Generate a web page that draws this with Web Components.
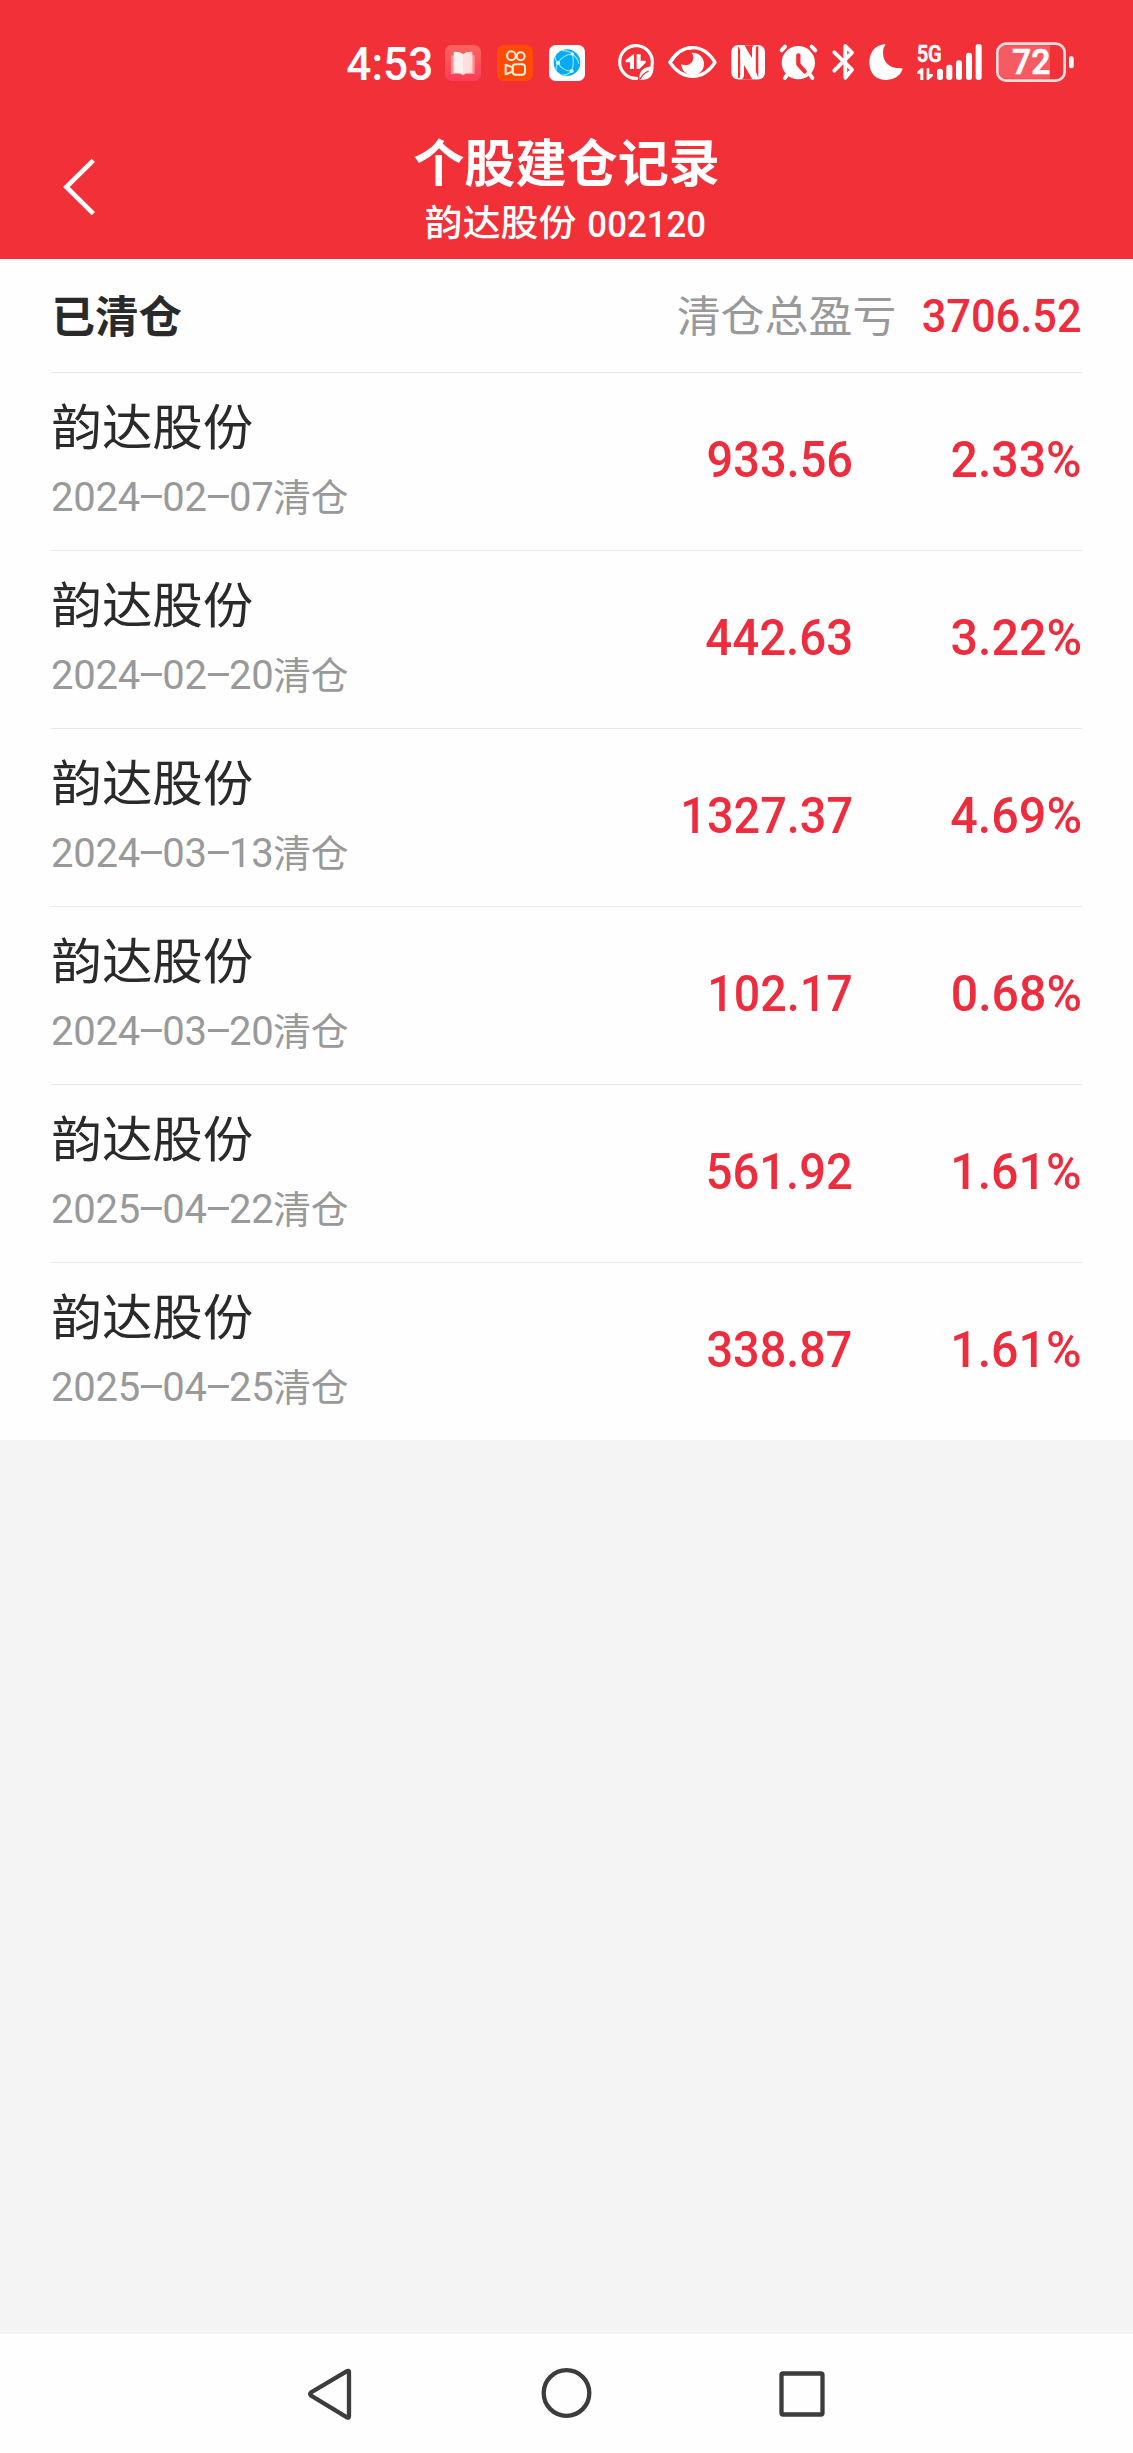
<!DOCTYPE html>
<html lang="zh-CN">
<head>
<meta charset="utf-8">
<title>个股建仓记录</title>
<style>
html,body{margin:0;padding:0}
body{background:#f4f4f4;font-family:Roboto,"Noto Sans CJK SC",sans-serif;color:#2a2a2a}
</style>
</head>
<body>
<record-page></record-page>
<script>
// Text whose drawn extent fills a w × h box exactly.
class FitText extends HTMLElement{
  constructor(){
    super();
    this.attachShadow({mode:'open'}).innerHTML=`<style>
      :host{display:block;flex:none;position:relative;white-space:nowrap;line-height:1}
      span{display:inline-block;transform-origin:0 0;white-space:pre}
      i{display:inline-block;width:0;height:0}
    </style><span><slot></slot><i></i></span>`;
  }
  connectedCallback(){
    const w=+this.getAttribute('w'),h=+this.getAttribute('h');
    this.style.width=w+'px';this.style.height=h+'px';
    const s=this.shadowRoot.querySelector('span'),p=this.shadowRoot.querySelector('i');
    const cs=getComputedStyle(this),c=document.createElement('canvas').getContext('2d');
    // Measured at ten times the size, since glyph extents are rounded to whole pixels.
    c.font=`${cs.fontWeight} ${parseFloat(cs.fontSize)*10}px ${cs.fontFamily}`;
    const m=c.measureText(this.textContent);
    const L=m.actualBoundingBoxLeft/10,R=m.actualBoundingBoxRight/10,A=m.actualBoundingBoxAscent/10,D=m.actualBoundingBoxDescent/10;
    const base=p.getBoundingClientRect().bottom-s.getBoundingClientRect().top;
    const kx=w/(R+L),ky=h/(A+D);
    s.style.transform=`translate(${L*kx}px,${-(base-A)*ky}px) scale(${kx},${ky})`;
  }
}
customElements.define('fit-text',FitText);

class StatusBar extends HTMLElement{
  constructor(){
    super();
    this.attachShadow({mode:'open'}).innerHTML=`<style>
      :host{display:flex;height:70px;padding:30px 0 0 347.3px;color:#fff}
      svg{display:block;height:70px;flex:none;fill:#fff;overflow:visible}
      .l{fill:none;stroke:#fff;stroke-linecap:round;stroke-linejoin:round}
      .r{fill:#f13038}
      fit-text{font-size:47px;font-weight:500;margin-top:16.8px}
      text{font-family:Roboto,sans-serif;font-weight:500}
    </style>
    <fit-text w="84" h="34.2">4:53</fit-text>
    <svg style="margin-left:12.7px" width="38" viewBox="342 0 114 210"><defs><linearGradient id="b" x2="0" y2="1"><stop stop-color="#ff6560"/><stop offset="1" stop-color="#ff3c58"/></linearGradient></defs><rect x="345" y="45" width="108" height="108" rx="20" fill="url(#b)"/><path d="M363 76h71v56h-28l-7 4-7-4h-29z" fill="#ff9292"/><path d="M371 66q17-2 28 6v62q-11-8-28-5z" fill="#fff0ee"/><path d="M427 66q-17-2-28 6v62q11-8 28-5z" fill="#ffdedc"/></svg>
    <svg style="margin-left:14px" width="38" viewBox="498 0 114 210"><rect x="501" y="45" width="108" height="108" rx="20" fill="#ff4b08"/><g fill="none" stroke="#fff0d8" stroke-width="6"><circle cx="544" cy="77" r="13"/><circle cx="572" cy="79" r="12"/><rect x="548" y="103" width="37" height="31" rx="9"/><path stroke-linejoin="round" d="M548 112l-21-8v29l21-8z"/></g></svg>
    <svg style="margin-left:14px" width="38" viewBox="654 0 114 210"><rect x="657" y="45" width="108" height="108" rx="20"/><circle cx="711" cy="98" r="40" fill="#08a9f5"/><g fill="none" stroke="#8ceaf2" stroke-width="3.500"><path d="M684 99q14-25 43-27M684 99q14 25 41 24M725 123q9-26 2-51M695 62q20-2 32 10M727 72q15 10 20 29M684 99q-10-10-8-19M684 99q-8 13-5 23M725 123q-13 14-30 12"/></g><g fill="#d9ffff"><circle cx="684" cy="99" r="6"/><circle cx="727" cy="72" r="5"/><circle cx="725" cy="123" r="6"/></g></svg>
    <svg style="margin-left:30px" width="39" viewBox="48 0 117 210"><path class="l" stroke-width="9.500" stroke-linecap="butt" d="M156 106A49 49 0 1 0 110 145"/><path d="M102 71L77 91V97H90V117H102zM110 73V117H118L137 98V92H122V73z"/><path d="M119 149q-6-38 42-40q0 45-42 40z"/><path d="M120 148q8-17 26-25" fill="none" stroke="#f13038" stroke-width="4"/></svg>
    <svg style="margin-left:13px" width="49" viewBox="204 0 147 210"><path class="l" stroke-width="10" d="M210 97Q238 53 278 53Q318 53 345 97Q318 139 278 139Q238 139 210 97z"/><circle cx="278" cy="102" r="34"/><circle cx="257" cy="83" r="23" class="r"/><path class="l" stroke-width="10" d="M210 97Q238 53 278 53"/></svg>
    <svg style="margin-left:13px" width="36" viewBox="390 0 108 210"><rect x="394" y="45" width="101" height="103" rx="20"/><path class="r" d="M414 49V144H422V49zM467 49V144H475V49zM433 46L456 84V62Q456 50 463 46zM432 100L458 147H426Q432 142 432 130z"/><path d="M412 45H433L477 148H457L421 86V60z" transform="translate(0 0)"/><path class="r" d="M427 64L430 62L466 120V126L463 128L427 76z" opacity="0"/><path d="M421 64h11v70q0 9-6 14h-12q7-4 7-14zM456 60q0-12 8-15h10q-8 5-8 15v66l-10-15z"/></svg>
    <svg style="margin-left:12px" width="40" viewBox="534 0 120 210"><circle cx="595" cy="98" r="50"/><path class="l" stroke-width="12" d="M545 61l10-11M646 61l-11-11M561 135l-6 9M631 135l6 9"/><path d="M595 76v27l19 21" fill="none" stroke="#f13038" stroke-width="13" stroke-linecap="round" stroke-linejoin="round"/></svg>
    <svg style="margin-left:13px" width="25" viewBox="693 0 75 210"><path class="l" stroke-width="11.500" d="M703 67l53 52-20 24V48l20 20-53 54"/></svg>
    <svg style="margin-left:12px" width="36" viewBox="24 0 108 210"><path d="M73 42Q28 51 28 99Q31 149 79 150Q116 149 128 118Q127 113 121 115Q69 113 69 65Q69 53 76 45Q77 42 73 42z"/></svg>
    <svg style="margin-left:12px" width="66" viewBox="168 0 198 210"><text x="170" y="95" font-size="70" stroke="#fff" stroke-width="2" textLength="75" lengthAdjust="spacingAndGlyphs">5G</text><path d="M190 115v35h-9v-19h-9v-6l11-10zM200 115h8v17h11v5l-13 13h-6z"/><rect x="231" y="116" width="18" height="34" rx="8"/><rect x="259" y="104" width="18" height="46" rx="8"/><rect x="288" y="91" width="18" height="59" rx="8"/><rect x="318" y="68" width="18" height="82" rx="8"/><rect x="347" y="42" width="18" height="108" rx="8"/></svg>
    <svg style="margin-left:13px" width="80" viewBox="405 0 240 210"><path d="M440 46H570V146H440Q417 146 417 123V69Q417 46 440 46z" fill="#f65a62"/><rect x="412" y="41" width="202" height="111" rx="27" fill="none" stroke="#ffdede" stroke-width="8"/><rect x="627" y="79" width="14" height="36" rx="6"/><text x="456" y="133" font-size="105" stroke="#fff" stroke-width="2" textLength="115" lengthAdjust="spacingAndGlyphs">72</text></svg>`;
  }
}
customElements.define('status-bar',StatusBar);

class TitleBar extends HTMLElement{
  constructor(){
    super();
    this.attachShadow({mode:'open'}).innerHTML=`<style>
      :host{display:flex;color:#fff;height:159px}
      svg{display:block;flex:none;margin:30px 0 0 40px}
      .t{margin:39.3px 0 0 254.300px;display:flex;flex-direction:column;font-family:"Noto Sans CJK SC",sans-serif}
      .s{display:flex;margin:15.700px 0 0 11.700px}
      .n{font-family:Roboto,sans-serif;margin:4.700px 0 0 13.300px;font-weight:500;font-size:39px}
    </style>
    <svg width="120" height="120" viewBox="0 0 360 360"><path d="M160 91L79 171L160 251" fill="none" stroke="#fff" stroke-width="14"/></svg>
    <div class="t"><fit-text w="304.4" h="49" style="font-size:51px;font-weight:700">个股建仓记录</fit-text>
    <div class="s"><fit-text w="149.7" h="35" style="font-size:37.5px;font-weight:500">韵达股份</fit-text><fit-text class="n" w="115.7" h="28.3">002120</fit-text></div></div>`;
  }
}
customElements.define('title-bar',TitleBar);

class SummaryRow extends HTMLElement{
  constructor(){
    super();
    this.attachShadow({mode:'open'}).innerHTML=`<style>
      :host{display:flex;height:113px;margin:0 51px;border-bottom:1px solid #e8e8e8;align-items:flex-start;font-family:"Noto Sans CJK SC",sans-serif}
      .a{font-size:43px;font-weight:700;margin:36px auto 0 4.300px}
      .b{font-size:44px;color:#999;margin:37px 29px 0 0}
      .c{font:500 48px Roboto,sans-serif;line-height:1;color:#ed2c3d;margin:37.700px 2px 0 0}
    </style><fit-text class="a" w="126.300" h="42">已清仓</fit-text><fit-text class="b" w="216.3" h="40.3">清仓总盈亏</fit-text><fit-text class="c" w="157" h="35.3">3706.52</fit-text>`;
  }
}
customElements.define('summary-row',SummaryRow);

class RecordRow extends HTMLElement{
  constructor(){
    super();
    this.attachShadow({mode:'open'});
  }
  connectedCallback(){
    const a=n=>this.getAttribute(n);
    const date=a('date').split('-').join('<span class="h">-</span>');
    this.shadowRoot.innerHTML=`<style>
      :host{display:flex;height:177px;margin:0 51px;border-bottom:1px solid #e8e8e8}
      :host(:last-of-type){border-bottom-color:transparent;height:176px}
      .l{flex:1;display:flex;flex-direction:column}
      .name{font:400 50px "Noto Sans CJK SC",sans-serif;line-height:1;margin:30px 0 0 2px}
      .date{display:flex;align-items:baseline;color:#999;font-size:40px;line-height:50px;height:50px;letter-spacing:-.2px;margin:20px 0 0 0}
      .d{white-space:nowrap}
      .h{display:inline-block;width:22.200px;text-align:center;transform:translateY(-2.500px) scaleX(2.2)}
      .q{font:400 37.700px "Noto Sans CJK SC",sans-serif;letter-spacing:0;line-height:50px;margin-left:-.5px}
      .v,.p{font-weight:500;font-size:50px;color:#ed2c3d;margin-top:67.300px}
      .box{width:229.500px;display:flex;justify-content:flex-end;margin-right:1.700px}
    </style>
    <div class="l"><fit-text class="name" w="199.500" h="47">韵达股份</fit-text><div class="date"><span class="d">${date}</span><span class="q">清仓</span></div></div>
    <fit-text class="v" w="${a('vw')}" h="37.500">${a('value')}</fit-text>
    <div class="box"><fit-text class="p" w="${a('pw')}" h="37.500">${a('rate')}</fit-text></div>`;
  }
}
customElements.define('record-row',RecordRow);

class NavBar extends HTMLElement{
  constructor(){
    super();
    this.attachShadow({mode:'open'}).innerHTML=`<style>
      :host{display:flex;height:119px;background:#fefefe;padding-left:306px;align-items:flex-start}
      svg{fill:none;stroke:#3c3c3c;stroke-width:4.300px;display:block;flex:none}
    </style>
    <svg width="48" height="119" viewBox="0 0 48 119"><path d="M41 37.200Q43 36 43 38.500V82Q43 84.500 41 83.300L5 61.500Q3.500 60 5 58.500z"/></svg>
    <svg style="margin-left:185px" width="56" height="119" viewBox="0 0 56 119"><circle cx="27.500" cy="59" r="22.800"/></svg>
    <svg style="margin-left:181px" width="52" height="119" viewBox="0 0 52 119"><rect x="5.500" y="39.500" width="41" height="41" rx="1.500"/></svg>`;
  }
}
customElements.define('nav-bar',NavBar);

class RecordPage extends HTMLElement{
  constructor(){
    super();
    this.attachShadow({mode:'open'}).innerHTML=`<style>
      :host{display:flex;flex-direction:column;width:1133px;height:2453px;background:#f4f4f4;overflow:hidden}
      header{background:#f13038;height:259px}
      main{background:#fefefe}
      nav-bar{margin-top:auto}
    </style>
    <header><status-bar></status-bar><title-bar></title-bar></header>
    <main><summary-row></summary-row>
    <record-row date="2024-02-07" value="933.56" vw="143.3" rate="2.33%" pw="128"></record-row>
    <record-row date="2024-02-20" value="442.63" vw="144.7" rate="3.22%" pw="128.5"></record-row>
    <record-row date="2024-03-13" value="1327.37" vw="167.3" rate="4.69%" pw="129.5"></record-row>
    <record-row date="2024-03-20" value="102.17" vw="140" rate="0.68%" pw="127.3"></record-row>
    <record-row date="2025-04-22" value="561.92" vw="143" rate="1.61%" pw="126"></record-row>
    <record-row date="2025-04-25" value="338.87" vw="142.7" rate="1.61%" pw="126"></record-row></main>
    <nav-bar></nav-bar>`;
  }
}
customElements.define('record-page',RecordPage);
</script>
</body>
</html>
